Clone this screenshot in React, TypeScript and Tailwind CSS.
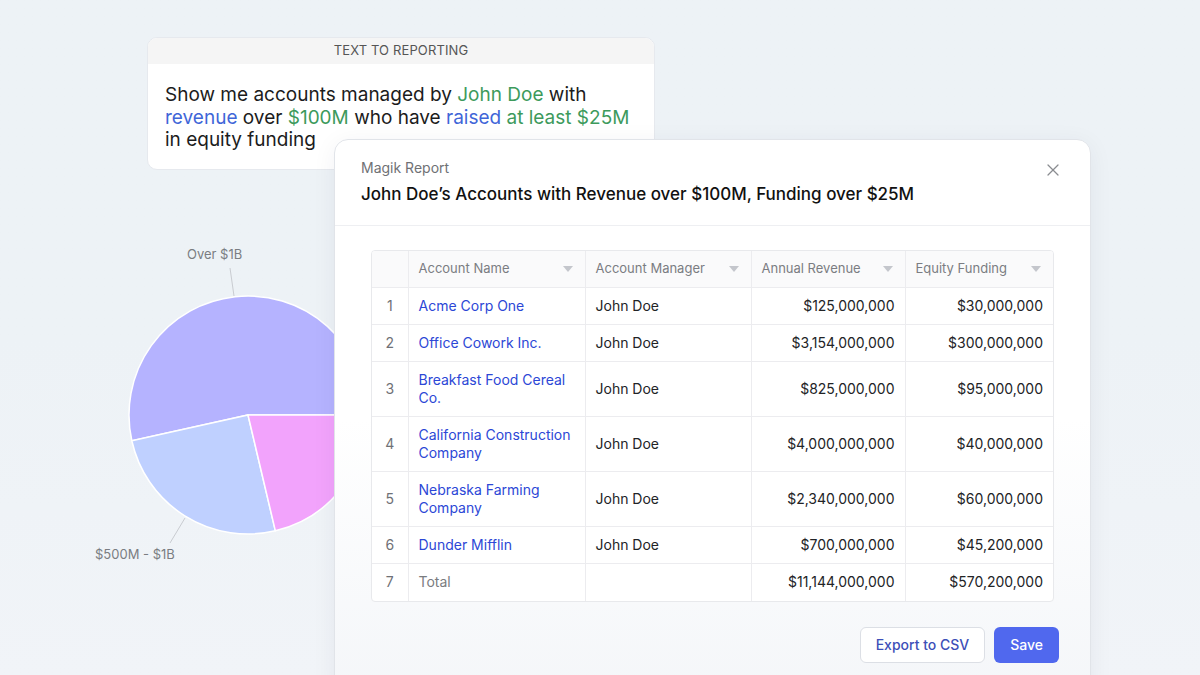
import { X } from "lucide-react";

const rows = [
  { n: 1, name: ["Acme Corp One"], manager: "John Doe", revenue: "$125,000,000", funding: "$30,000,000" },
  { n: 2, name: ["Office Cowork Inc."], manager: "John Doe", revenue: "$3,154,000,000", funding: "$300,000,000" },
  { n: 3, name: ["Breakfast Food Cereal", "Co."], manager: "John Doe", revenue: "$825,000,000", funding: "$95,000,000" },
  { n: 4, name: ["California Construction", "Company"], manager: "John Doe", revenue: "$4,000,000,000", funding: "$40,000,000" },
  { n: 5, name: ["Nebraska Farming", "Company"], manager: "John Doe", revenue: "$2,340,000,000", funding: "$60,000,000" },
  { n: 6, name: ["Dunder Mifflin"], manager: "John Doe", revenue: "$700,000,000", funding: "$45,200,000" },
];

const columns = ["Account Name", "Account Manager", "Annual Revenue", "Equity Funding"];

function Caret() {
  return (
    <svg width="10" height="6" viewBox="0 0 10 6" className="shrink-0">
      <path d="M0 0 L10 0 L5 6 Z" fill="#c4c6cc" />
    </svg>
  );
}

function PieChart() {
  // center 120,120 inside the svg, r = 119
  const cx = 120;
  const cy = 120;
  const r = 119;
  const pt = (deg: number) => {
    const a = (deg * Math.PI) / 180;
    return `${cx + r * Math.cos(a)} ${cy + r * Math.sin(a)}`;
  };
  const slice = (a0: number, a1: number) =>
    `M${cx} ${cy} L${pt(a0)} A${r} ${r} 0 ${a1 - a0 > 180 ? 1 : 0} 1 ${pt(a1)} Z`;
  return (
    <svg width="240" height="240" viewBox="0 0 240 240">
      <path d={slice(167.5, 360)} fill="#b5b3ff" stroke="#ffffff" strokeWidth="1.5" />
      <path d={slice(76.7, 167.5)} fill="#bfd0ff" stroke="#ffffff" strokeWidth="1.5" />
      <path d={slice(0, 76.7)} fill="#f2a3fc" stroke="#ffffff" strokeWidth="1.5" />
    </svg>
  );
}

export default function App() {
  return (
    <div
      className="relative w-[1200px] h-[675px] overflow-hidden bg-gradient-to-b from-[#edf2f6] via-[#edf2f6] to-[#f1f4f8]"
      style={{ fontFamily: "Inter, 'Noto Sans', sans-serif" }}
    >
      {/* prompt card */}
      <div className="absolute left-[147px] top-[37px] w-[508px] bg-white rounded-[10px] border border-[#e6e9ee] overflow-hidden">
        <div className="h-[26px] bg-[#f5f5f5] flex items-center justify-center text-[13px] text-[#555555] tracking-[0.01em]">
          TEXT TO REPORTING
        </div>
        <div className="px-[17px] pt-[20px] pb-[17px] text-[19px] leading-[22.5px] text-[#1c1c1c]">
          Show me accounts managed by <span className="text-[#3d9a5c]">John Doe</span> with
          <br />
          <span className="text-[#3f66d8]">revenue</span> over <span className="text-[#3d9a5c]">$100M</span> who have{" "}
          <span className="text-[#3f66d8]">raised</span> <span className="text-[#3d9a5c]">at least $25M</span>
          <br />
          in equity funding
        </div>
      </div>

      {/* pie chart */}
      <div className="absolute left-[128px] top-[295px]">
        <PieChart />
      </div>
      <svg className="absolute left-0 top-0" width="340" height="675">
        <line x1="230" y1="268" x2="234" y2="296" stroke="#c9ccd1" strokeWidth="1" />
        <line x1="185" y1="518" x2="170" y2="543" stroke="#c9ccd1" strokeWidth="1" />
      </svg>
      <div className="absolute left-[187px] top-[245px] text-[13px] text-[#7a7d82]">Over $1B</div>
      <div className="absolute left-[95px] top-[545px] text-[13px] text-[#7a7d82]">$500M - $1B</div>

      {/* report modal */}
      <div className="absolute left-[334px] top-[139px] w-[757px] h-[560px] rounded-[14px] border border-[#e1e4e9] bg-gradient-to-b from-white via-white to-[#f4f6f9] shadow-[0_4px_24px_rgba(30,40,60,0.06)] flex flex-col">
        <div className="relative px-[26px] pt-[19px] pb-[20px] border-b border-[#eeeff2]">
          <div className="text-[14px] leading-[18px] text-[#6f7175]">Magik Report</div>
          <div className="mt-[6px] text-[17px] leading-[22px] font-medium text-[#111111]">
            John Doe’s Accounts with Revenue over $100M, Funding over $25M
          </div>
          <X className="absolute right-[27px] top-[20px] text-[#8a8c90]" size={20} strokeWidth={1.5} />
        </div>

        <div className="px-[36px] pt-[24px]">
          <div className="rounded-[4px] border border-[#e8e9ec] overflow-hidden bg-white">
            <table className="w-full table-fixed border-collapse text-[14px]">
              <colgroup>
                <col className="w-[36px]" />
                <col className="w-[177px]" />
                <col className="w-[166px]" />
                <col className="w-[154px]" />
                <col />
              </colgroup>
              <thead>
                <tr className="h-[36px] bg-[#fafafb]">
                  <th className="border-r border-b border-[#ececef]" />
                  {columns.map((c, i) => (
                    <th
                      key={c}
                      className={`pl-[10px] pr-[12px] border-b border-[#ececef] font-normal text-[13px] text-[#7b7d82] text-left ${
                        i < 3 ? "border-r" : ""
                      }`}
                    >
                      <div className="flex items-center justify-between">
                        <span>{c}</span>
                        <Caret />
                      </div>
                    </th>
                  ))}
                </tr>
              </thead>
              <tbody>
                {rows.map((r) => (
                  <tr key={r.n} className="border-b border-[#ececef]">
                    <td className="py-[9px] text-center text-[#6f7176] border-r border-[#ececef] leading-[18px]">{r.n}</td>
                    <td className="py-[9px] pl-[10px] pr-[8px] text-[#2c47d6] border-r border-[#ececef] leading-[18px]">
                      {r.name.map((l, i) => (
                        <div key={i}>{l}</div>
                      ))}
                    </td>
                    <td className="py-[9px] pl-[10px] text-[#222326] border-r border-[#ececef] leading-[18px]">{r.manager}</td>
                    <td className="py-[9px] pr-[10px] text-right text-[#222326] border-r border-[#ececef] leading-[18px]">{r.revenue}</td>
                    <td className="py-[9px] pr-[10px] text-right text-[#222326] leading-[18px]">{r.funding}</td>
                  </tr>
                ))}
                <tr>
                  <td className="py-[9.5px] text-center text-[#6f7176] border-r border-[#ececef] leading-[18px]">7</td>
                  <td className="py-[9.5px] pl-[10px] text-[#7a7c80] border-r border-[#ececef] leading-[18px]">Total</td>
                  <td className="border-r border-[#ececef]" />
                  <td className="py-[9.5px] pr-[10px] text-right text-[#222326] border-r border-[#ececef] leading-[18px]">$11,144,000,000</td>
                  <td className="py-[9.5px] pr-[10px] text-right text-[#222326] leading-[18px]">$570,200,000</td>
                </tr>
              </tbody>
            </table>
          </div>

          <div className="mt-[25px] flex justify-end gap-[9px] -mr-[5px]">
            <button className="h-[36px] px-[15px] rounded-[6px] border border-[#dcdfe5] bg-white text-[14px] font-medium text-[#3d4fb8]">
              Export to CSV
            </button>
            <button className="h-[36px] px-[16px] rounded-[6px] bg-[#5068ee] text-[14px] font-medium text-white">
              Save
            </button>
          </div>
        </div>
      </div>
    </div>
  );
}
